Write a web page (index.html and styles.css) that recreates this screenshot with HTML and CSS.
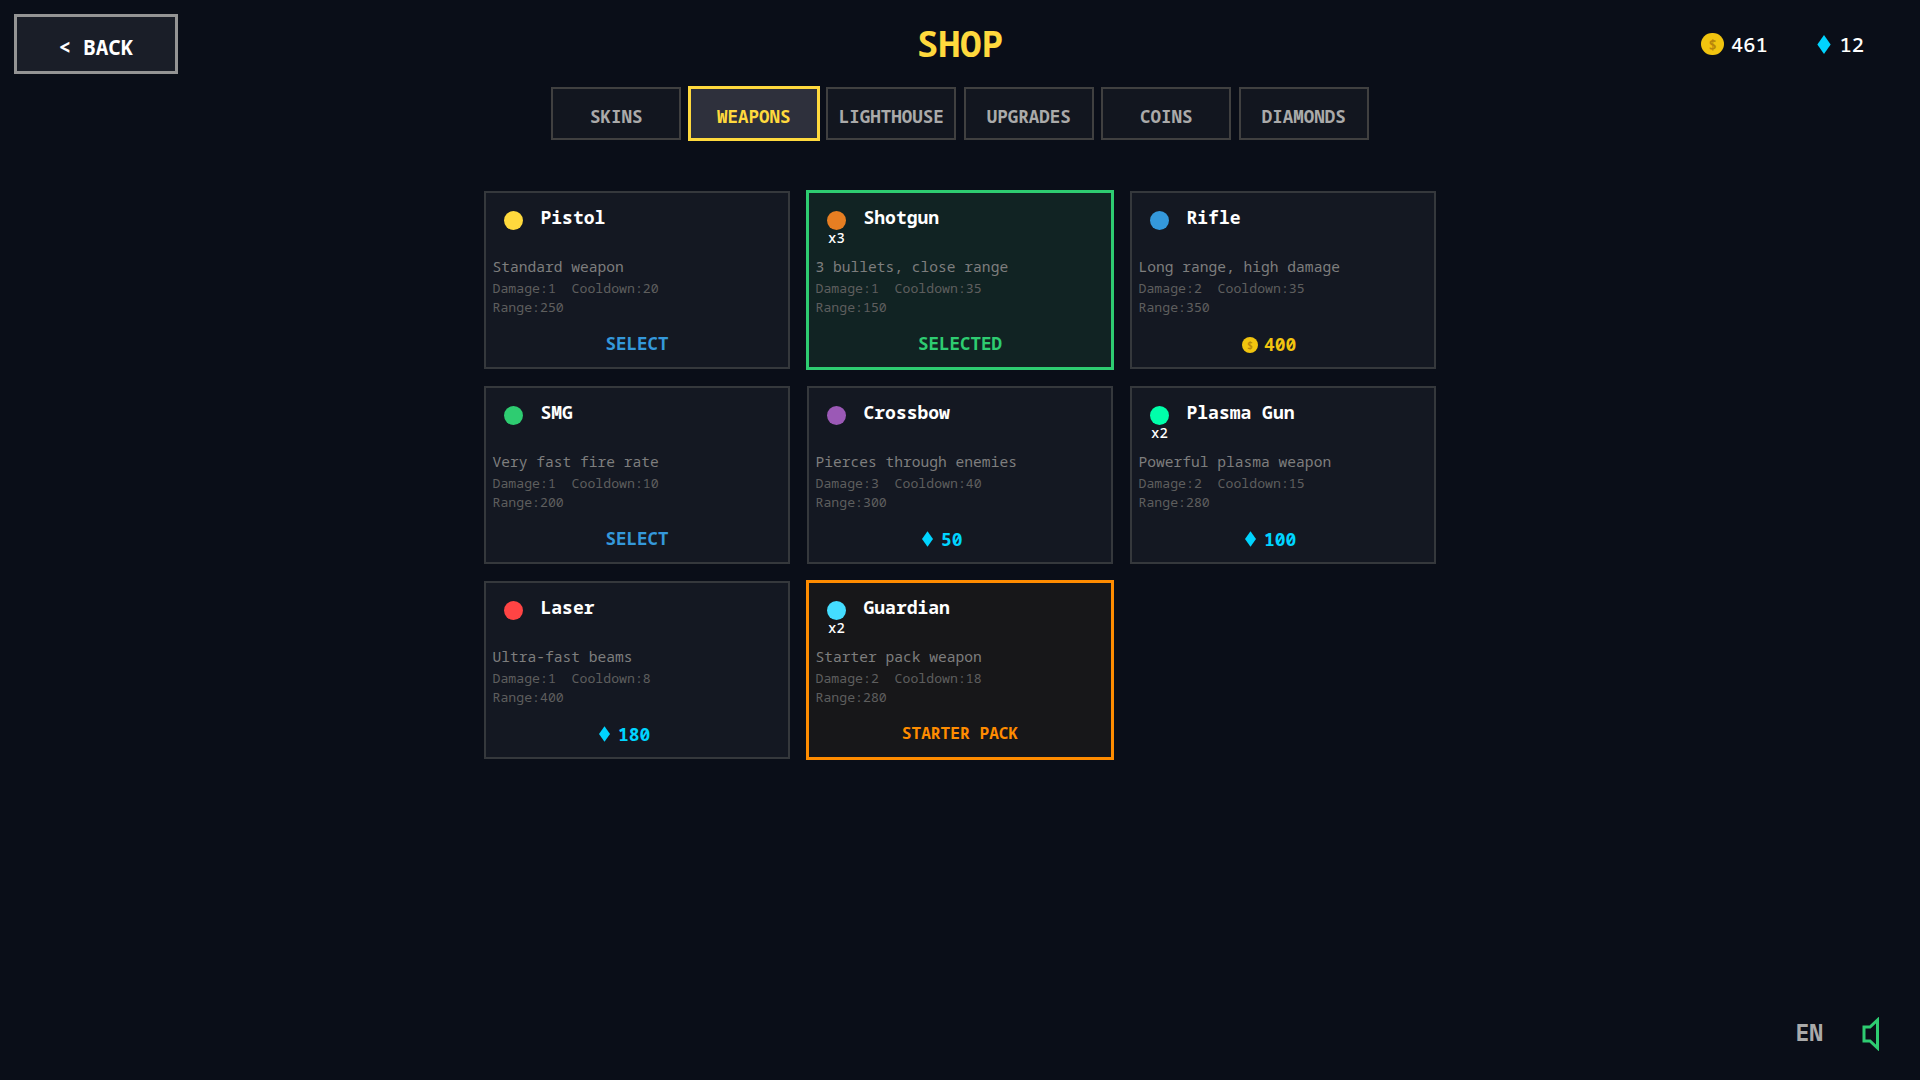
FILE: index.html
```html
<!DOCTYPE html>
<html lang="en">
<head>
<meta charset="utf-8">
<title>Shop</title>
<link rel="stylesheet" href="styles.css">
</head>
<body>
<div class="page">
  <header class="top">
    <div class="top-left"><button class="back"><span class="chev">&lt;</span><span>BACK</span></button></div>
    <h1 class="title">SHOP</h1>
    <div class="wallet">
      <span class="coin coin-lg">$</span><span class="amount amount-coin">461</span>
      <svg class="gem-lg" viewBox="0 0 14 20"><path d="M7 0L14 10L7 20L0 10Z"/></svg><span class="amount amount-gem">12</span>
    </div>
  </header>
  <nav class="tabs">
    <div class="tab">SKINS</div>
    <div class="tab tab-on">WEAPONS</div>
    <div class="tab">LIGHTHOUSE</div>
    <div class="tab">UPGRADES</div>
    <div class="tab">COINS</div>
    <div class="tab">DIAMONDS</div>
  </nav>
  <main class="grid">
    <article class="card">
      <div class="head"><div class="dotbox"><span class="dot c-pistol"></span></div><div class="name">Pistol</div></div>
      <p class="desc">Standard weapon</p>
      <p class="stats">Damage:1&nbsp;&nbsp;Cooldown:20</p><p class="stats">Range:250</p>
      <div class="action select">SELECT</div>
    </article>
    <article class="card card-sel">
      <div class="head"><div class="dotbox"><span class="dot c-shotgun"></span><span class="mult">x3</span></div><div class="name">Shotgun</div></div>
      <p class="desc">3 bullets, close range</p>
      <p class="stats">Damage:1&nbsp;&nbsp;Cooldown:35</p><p class="stats">Range:150</p>
      <div class="action selected">SELECTED</div>
    </article>
    <article class="card">
      <div class="head"><div class="dotbox"><span class="dot c-rifle"></span></div><div class="name">Rifle</div></div>
      <p class="desc">Long range, high damage</p>
      <p class="stats">Damage:2&nbsp;&nbsp;Cooldown:35</p><p class="stats">Range:350</p>
      <div class="action price price-coin"><span class="coin coin-sm">$</span>400</div>
    </article>
    <article class="card">
      <div class="head"><div class="dotbox"><span class="dot c-smg"></span></div><div class="name">SMG</div></div>
      <p class="desc">Very fast fire rate</p>
      <p class="stats">Damage:1&nbsp;&nbsp;Cooldown:10</p><p class="stats">Range:200</p>
      <div class="action select">SELECT</div>
    </article>
    <article class="card">
      <div class="head"><div class="dotbox"><span class="dot c-crossbow"></span></div><div class="name">Crossbow</div></div>
      <p class="desc">Pierces through enemies</p>
      <p class="stats">Damage:3&nbsp;&nbsp;Cooldown:40</p><p class="stats">Range:300</p>
      <div class="action price price-gem"><svg class="gem-sm" viewBox="0 0 14 20"><path d="M7 0L14 10L7 20L0 10Z"/></svg>50</div>
    </article>
    <article class="card">
      <div class="head"><div class="dotbox"><span class="dot c-plasma"></span><span class="mult">x2</span></div><div class="name">Plasma Gun</div></div>
      <p class="desc">Powerful plasma weapon</p>
      <p class="stats">Damage:2&nbsp;&nbsp;Cooldown:15</p><p class="stats">Range:280</p>
      <div class="action price price-gem"><svg class="gem-sm" viewBox="0 0 14 20"><path d="M7 0L14 10L7 20L0 10Z"/></svg>100</div>
    </article>
    <article class="card">
      <div class="head"><div class="dotbox"><span class="dot c-laser"></span></div><div class="name">Laser</div></div>
      <p class="desc">Ultra-fast beams</p>
      <p class="stats">Damage:1&nbsp;&nbsp;Cooldown:8</p><p class="stats">Range:400</p>
      <div class="action price price-gem"><svg class="gem-sm" viewBox="0 0 14 20"><path d="M7 0L14 10L7 20L0 10Z"/></svg>180</div>
    </article>
    <article class="card card-pack">
      <div class="head"><div class="dotbox"><span class="dot c-guardian"></span><span class="mult">x2</span></div><div class="name">Guardian</div></div>
      <p class="desc">Starter pack weapon</p>
      <p class="stats">Damage:2&nbsp;&nbsp;Cooldown:18</p><p class="stats">Range:280</p>
      <div class="action pack">STARTER PACK</div>
    </article>
  </main>
  <footer class="foot">
    <span class="lang">EN</span>
    <svg class="sound" viewBox="0 0 18 34"><path d="M3 10H9L16.5 3V31L9 24H3Z"/></svg>
  </footer>
</div>
</body>
</html>
```
FILE: styles.css
```css
* { box-sizing: border-box; }
html, body { margin: 0; height: 100%; }
body { background: #0a0e18; color: #fff; font-family: "Noto Sans Mono", "DejaVu Sans Mono", monospace; overflow: hidden; }
.page { height: 1080px; display: flex; flex-direction: column; padding: 14px 0 0; position: relative; }
.top { display: grid; grid-template-columns: 1fr auto 1fr; align-items: center; height: 60px; padding: 0 14px; }
.back { width: 164px; height: 60px; border: 3px solid #949494; background: #1a1e28; color: #fff; font-family: inherit; font-weight: 700; font-size: 21px; display: flex; align-items: center; justify-content: center; gap: 12px; padding: 5px 0 0; }
.title { margin: 0; color: #ffd93d; font-weight: 700; font-size: 36px; line-height: 58px; }
.wallet { display: flex; align-items: center; justify-content: flex-end; padding-right: 42px; font-size: 20.5px; font-weight: 500; }
.coin { display: inline-flex; align-items: center; justify-content: center; border-radius: 50%; background: #f1c40f; color: #b8860b; font-weight: 700; }
.coin-lg { width: 22.5px; height: 22.5px; font-size: 14px; }
.coin-sm { width: 16px; height: 16px; font-size: 10px; position: absolute; left: -22px; top: 4px; }
.amount { margin-left: 7px; }
.amount-coin { margin-right: 49.5px; }
.amount-gem { margin-left: 8px; }
.gem-lg { width: 14px; height: 19px; fill: #00d4ff; }
.gem-sm { width: 11px; height: 16px; fill: #00d4ff; position: absolute; left: -19px; top: 3.5px; }
.tabs { display: flex; justify-content: center; gap: 7.5px; margin-top: 13px; }
.tab { width: 130px; height: 53px; border: 2px solid #404040; background: #12161f; color: #aaa; font-weight: 700; font-size: 17.5px; display: flex; align-items: center; justify-content: center; padding-top: 5px; }
.tab-on { background: #2e303c; color: #ffd93d; border: 3px solid #ffd93d; margin: -1px; width: 132px; height: 55px; }
.grid { width: 952px; margin: 51px auto 0; display: grid; grid-template-columns: repeat(3, 306px); grid-auto-rows: 177.67px; column-gap: 17px; row-gap: 17.5px; }
.card { border: 2px solid #35383c; background: #141822; display: flex; flex-direction: column; padding: 0 6.5px; position: relative; }
.card-sel { border: 3px solid #2ecc71; background: #112323; margin: -1px; }
.card-pack { border: 3px solid #ff8c00; background: #171719; margin: -1px; }
.head { display: flex; height: 63px; padding-left: 11.5px; }
.dotbox { width: 19px; display: flex; flex-direction: column; align-items: center; padding-top: 18px; margin-right: 17.5px; }
.dot { width: 19px; height: 19px; border-radius: 50%; flex: none; }
.mult { font-size: 14px; line-height: 16px; white-space: nowrap; font-weight: 500; }
.name { font-weight: 700; font-size: 18px; padding-top: 12px; line-height: 24px; }
.c-pistol { background: #ffd93d; } .c-shotgun { background: #e67e22; } .c-rifle { background: #3498db; }
.c-smg { background: #2ecc71; } .c-crossbow { background: #9b59b6; } .c-plasma { background: #00ffaa; }
.c-laser { background: #ff4444; } .c-guardian { background: #44ddff; }
.desc { margin: 0; color: #7e7e7e; font-size: 14.6px; line-height: 20px; }
.stats { margin: 0; color: #5e5e5e; font-size: 13.2px; line-height: 19px; }
.desc + .stats { margin-top: 3px; }
.action { position: absolute; left: 0; right: 0; bottom: 13px; text-align: center; font-weight: 700; font-size: 17.5px; line-height: 22px; }
.select { color: #3498db; }
.selected { color: #2ecc71; }
.pack { color: #ff8c00; font-size: 16.2px; }
.price { left: calc(50% - 19px); right: auto; font-size: 18px; bottom: 12px; }
.price-coin { color: #f1c40f; }
.price-gem { color: #00d4ff; }
.foot { position: absolute; right: 41px; bottom: 28px; display: flex; align-items: center; gap: 38px; }
.lang { font-weight: 700; font-size: 23px; color: #aaa; margin-bottom: 4px; }
.sound { width: 18px; height: 34px; fill: none; stroke: #2ecc71; stroke-width: 3; }
```
